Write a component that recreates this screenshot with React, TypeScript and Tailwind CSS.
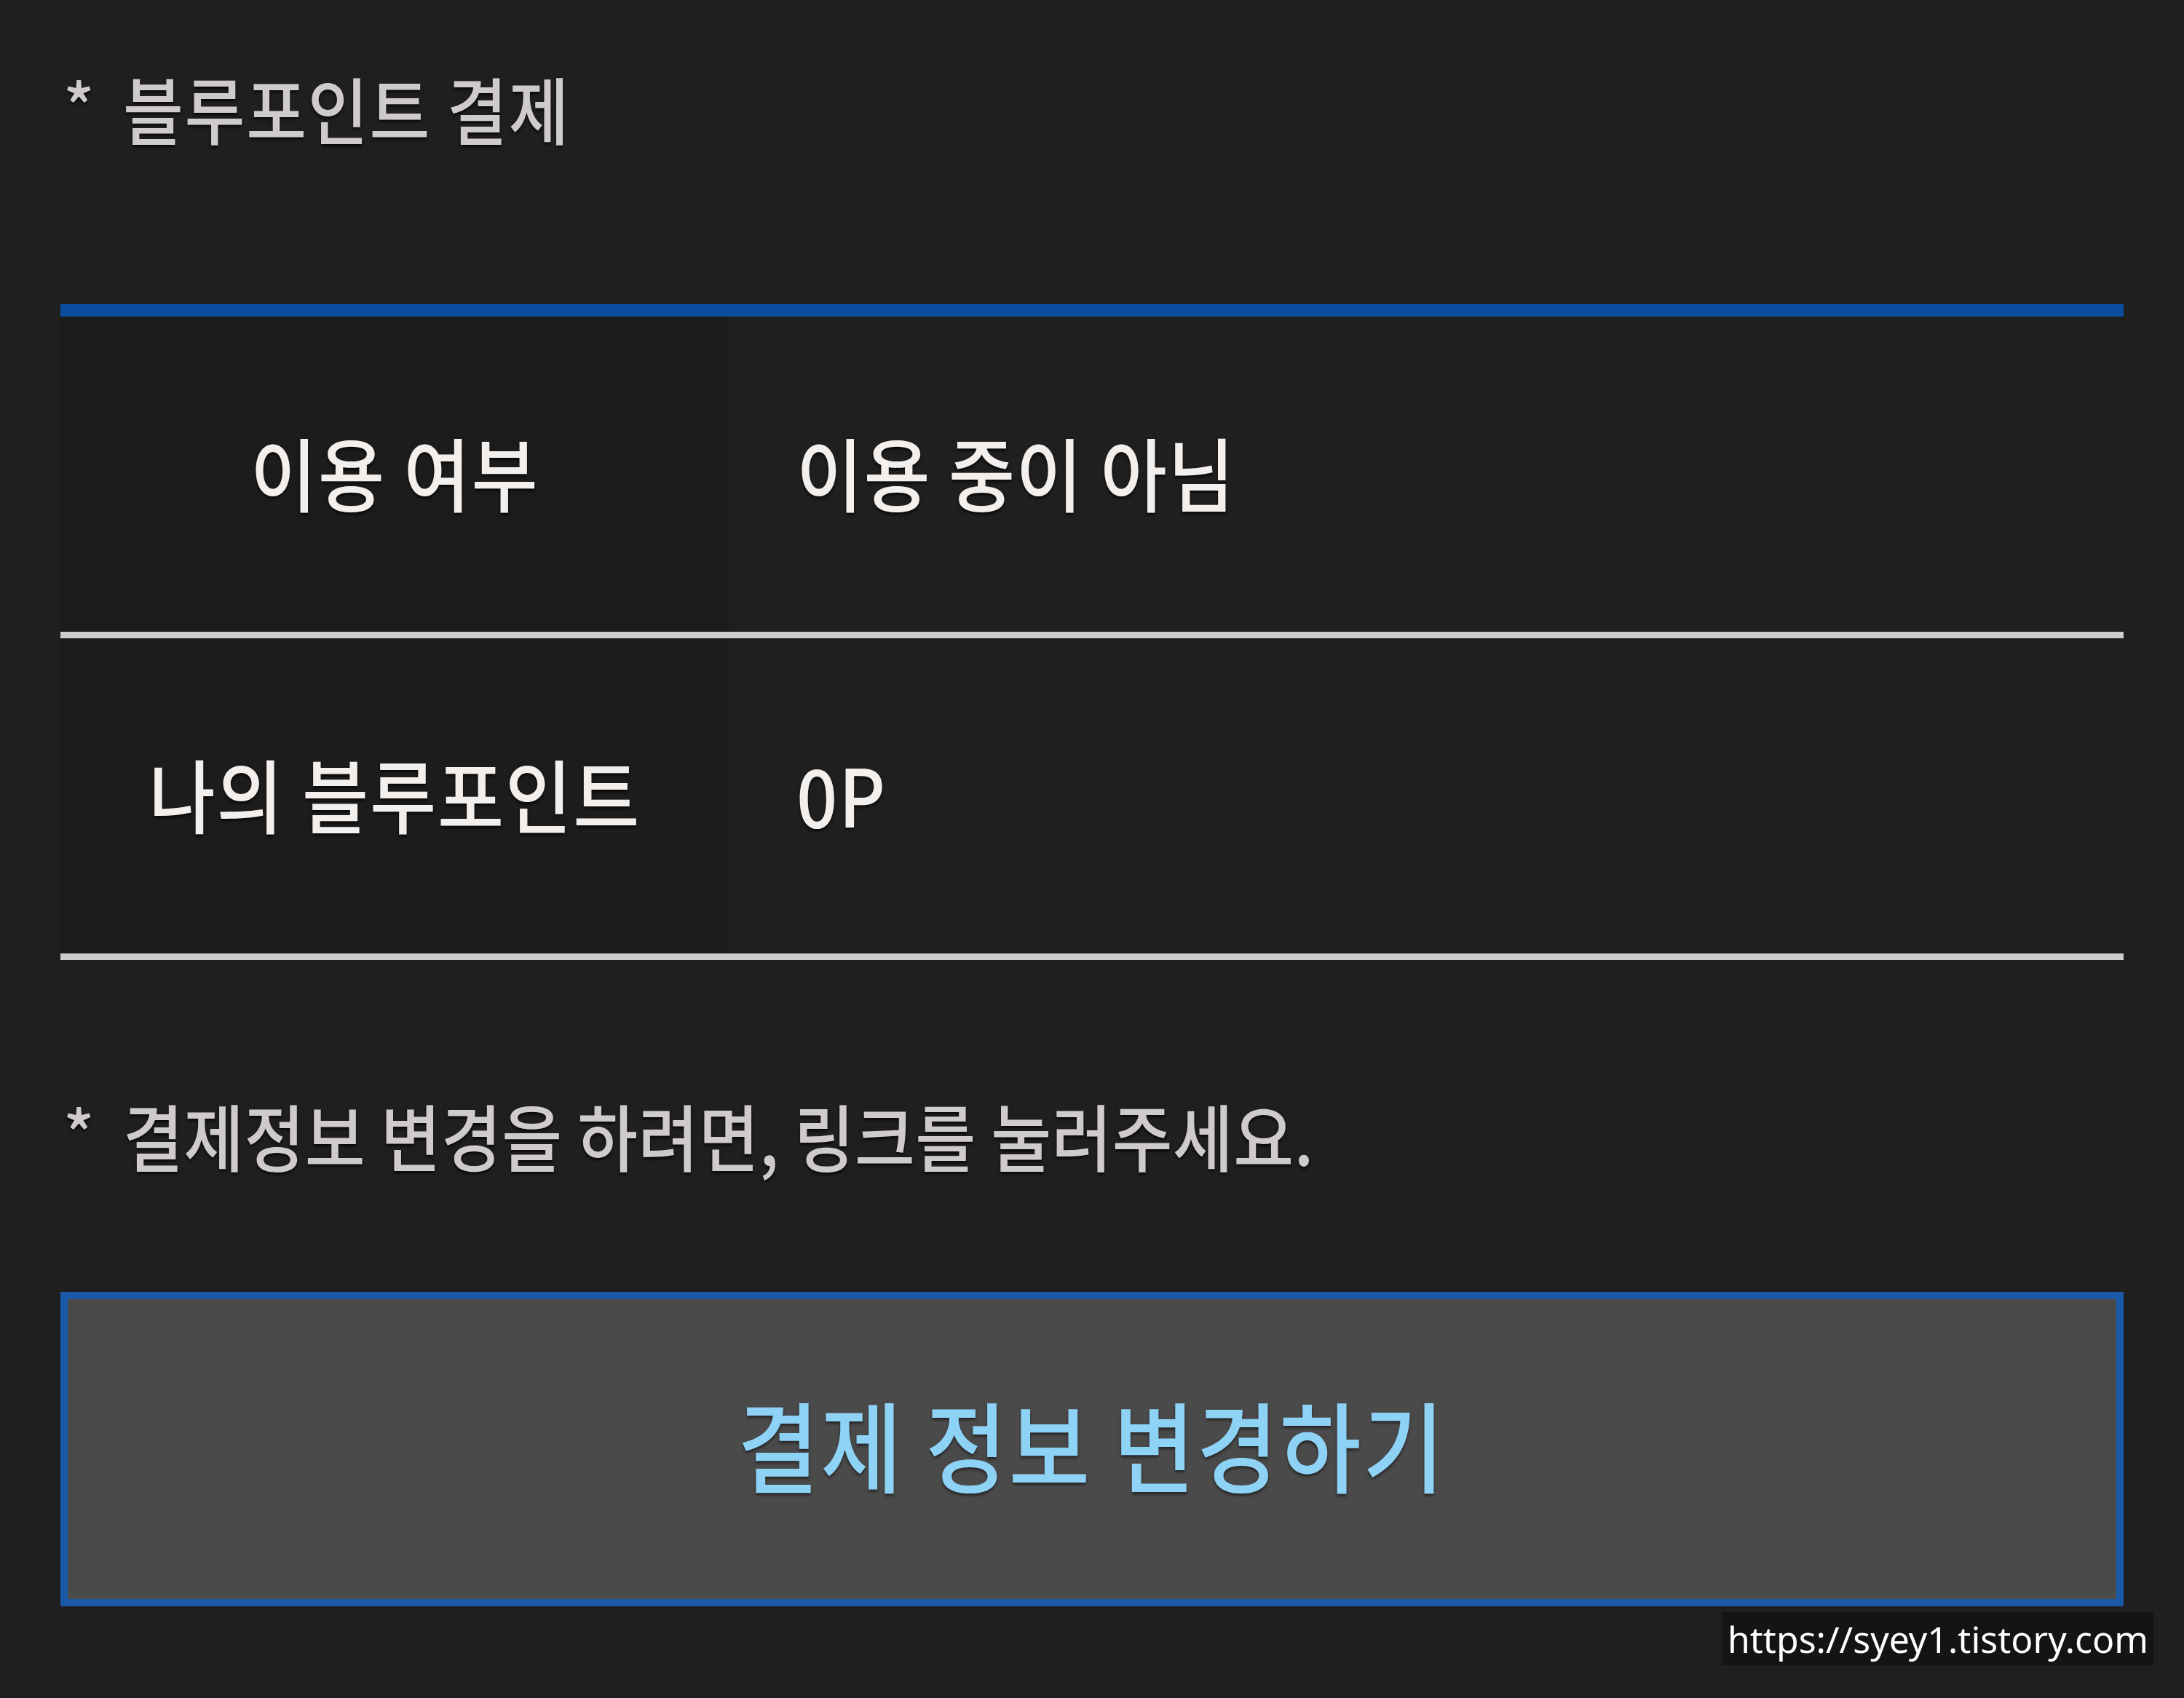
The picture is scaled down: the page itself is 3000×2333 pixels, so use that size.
const FONT = "font-['Noto_Sans_CJK_KR','Noto_Sans',sans-serif]";
const SHADOW = '[text-shadow:0_3px_4px_rgba(0,0,0,0.7)]';

const Note = ({ text, tight }: { text: string; tight?: boolean }) => (
    <div className={`flex items-start text-[100px] font-medium leading-none text-[#cfcbca] ${FONT} ${SHADOW}`}>
        <span className="w-[86px] shrink-0 pl-[4px] text-[88px]">*</span>
        <span
            className={`inline-block origin-left scale-x-[0.9] whitespace-nowrap ${tight ? 'tracking-[0.005em]' : 'tracking-[0.02em]'}`}
        >
            {text}
        </span>
    </div>
);

const Row = ({ label, value }: { label: string; value: string }) => (
    <div className="flex h-[442px] border-b-[9px] border-[#cdcdcd]">
        <div className="flex w-[919px] shrink-0 items-center justify-center bg-[#1c1c1c] pb-[10px]">
            <span className={`inline-block scale-x-[0.9] tracking-[0.02em] whitespace-nowrap text-[110px] font-medium leading-none text-[#f3efed] ${SHADOW}`}>
                {label}
            </span>
        </div>
        <div className="flex flex-1 items-center pb-[10px] pl-[92px]">
            <span className={`inline-block origin-left scale-x-[0.9] tracking-[0.015em] whitespace-nowrap text-[110px] font-medium leading-none text-[#f3efed] ${SHADOW}`}>
                {value}
            </span>
        </div>
    </div>
);

export default function App() {
    return (
        <div className={`relative min-h-[2333px] w-full bg-[#1f1f1f] px-[83px] ${FONT}`}>
            {/* Section title */}
            <div className="h-[418px] pt-[98px]">
                <Note text="블루포인트 결제" />
            </div>

            {/* Info table */}
            <div className="border-t-[17px] border-[#0a4c9e]">
                <Row label="이용 여부" value="이용 중이 아님" />
                <Row label="나의 블루포인트" value="0P" />
            </div>

            {/* Hint */}
            <div className="h-[456px] pt-[190px]">
                <Note text="결제정보 변경을 하려면, 링크를 눌러주세요." tight />
            </div>

            {/* Action button */}
            <button className="flex h-[432px] w-full items-center justify-center border-[10px] border-[#1b5aa8] bg-[#4a4a4b] pb-[18px]">
                <span className="inline-block scale-x-[0.9] tracking-[0.02em] whitespace-nowrap text-[135px] font-medium leading-none text-[#8ed2f5] [text-shadow:0_3px_4px_rgba(0,0,0,0.5)]">
                    결제 정보 변경하기
                </span>
            </button>

            {/* Watermark */}
            <div className="absolute right-[42px] top-[2215px] flex h-[73px] w-[592px] items-center justify-center bg-[#141414] font-['Noto_Sans',sans-serif] text-[50px] leading-none text-white">
                https://syey1.tistory.com
            </div>
        </div>
    );
}
